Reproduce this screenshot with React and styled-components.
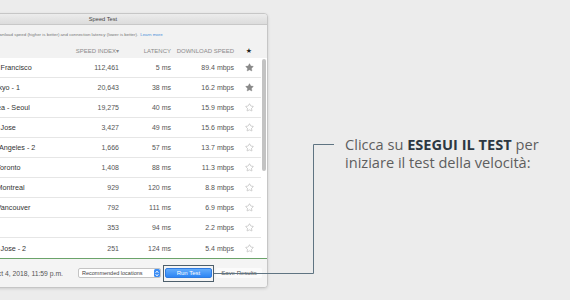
import React from "react";
import styled, { createGlobalStyle } from "styled-components";
import { Star } from "lucide-react";

const GlobalStyle = createGlobalStyle`
  html, body {
    margin: 0;
    padding: 0;
    background: #ececec;
  }
  body {
    font-family: "Liberation Sans", Arial, sans-serif;
    overflow: hidden;
  }
`;

const rows = [
  { name: "USA - San Francisco", speed: "112,461", latency: "5 ms", download: "89.4 mbps", fav: true },
  { name: "Japan - Tokyo - 1", speed: "20,643", latency: "38 ms", download: "16.2 mbps", fav: true },
  { name: "South Korea - Seoul", speed: "19,275", latency: "40 ms", download: "15.9 mbps" },
  { name: "USA - San Jose", speed: "3,427", latency: "49 ms", download: "15.6 mbps" },
  { name: "USA - Los Angeles - 2", speed: "1,666", latency: "57 ms", download: "13.7 mbps" },
  { name: "Canada - Toronto", speed: "1,408", latency: "88 ms", download: "11.3 mbps" },
  { name: "Canada - Montreal", speed: "929", latency: "120 ms", download: "8.8 mbps" },
  { name: "Canada - Vancouver", speed: "792", latency: "111 ms", download: "6.9 mbps" },
  { name: "", speed: "353", latency: "94 ms", download: "2.2 mbps" },
  { name: "USA - San Jose - 2", speed: "251", latency: "124 ms", download: "5.4 mbps" },
];

const App = () => {
  return (
    <Page>
      <GlobalStyle />
      <Window>
        <TitleBar>Speed Test</TitleBar>
        <Info>
          Ranked by download speed (higher is better) and connection latency
          (lower is better). <a>Learn more</a>
        </Info>
        <HeaderRow>
          <span />
          <HeadCell>SPEED INDEX▾</HeadCell>
          <HeadCell>LATENCY</HeadCell>
          <HeadCell>DOWNLOAD SPEED</HeadCell>
          <HeadStar>★</HeadStar>
        </HeaderRow>
        <ListArea>
          <List>
            {rows.map((r, i) => (
              <Row key={i}>
                <Location>{r.name}</Location>
                <Num>{r.speed}</Num>
                <Num>{r.latency}</Num>
                <Num>{r.download}</Num>
                <StarCell>
                  <Star
                    size={9}
                    strokeWidth={r.fav ? 1 : 1.3}
                    color={r.fav ? "#8a8a8a" : "#a0a0a0"}
                    fill={r.fav ? "#8a8a8a" : "none"}
                  />
                </StarCell>
              </Row>
            ))}
          </List>
          <Track>
            <Thumb />
          </Track>
        </ListArea>
        <Footer>
          <DateText>Last test: Oct 4, 2018, 11:59 p.m.</DateText>
          <Select>
            <span>Recommended locations</span>
            <Stepper>
              <svg width="4" height="7" viewBox="0 0 4 7">
                <path d="M0.5 3 L2 1 L3.5 3 M0.5 4 L2 6 L3.5 4" stroke="#fff" strokeWidth="0.8" fill="none" />
              </svg>
            </Stepper>
          </Select>
          <Highlight>
            <RunButton>Run Test</RunButton>
          </Highlight>
          <SaveButton>Save Results</SaveButton>
        </Footer>
      </Window>
      <Callout>
        Clicca su <b>ESEGUI IL TEST</b> per
        <br />
        iniziare il test della velocità:
      </Callout>
      <Connector width="570" height="300" viewBox="0 0 570 300">
        <path d="M214 273.5 H313.5 V144.5 H334" stroke="#5f7482" strokeWidth="1" fill="none" />
      </Connector>
    </Page>
  );
};

export default App;

const Page = styled.div`
  position: relative;
  width: 570px;
  height: 300px;
  display: flex;
  align-items: flex-start;
  overflow: hidden;
`;

const Window = styled.div`
  flex: none;
  margin-top: 13px;
  margin-left: -62px;
  width: 330px;
  height: 275px;
  box-sizing: border-box;
  border: 1px solid #c6c6c6;
  border-radius: 4px;
  background: #f2f2f2;
  box-shadow: 0 1px 3px rgba(0, 0, 0, 0.12);
  display: flex;
  flex-direction: column;
  overflow: hidden;
`;

const TitleBar = styled.div`
  height: 10px;
  flex: none;
  background: linear-gradient(#ececec, #dcdcdc);
  border-bottom: 1px solid #c8c8c8;
  font-size: 5.7px;
  color: #444;
  display: flex;
  align-items: center;
  justify-content: center;
`;

const Info = styled.div`
  height: 18px;
  flex: none;
  display: flex;
  align-items: center;
  padding-left: 33px;
  font-size: 4.4px;
  color: #777;
  white-space: nowrap;

  a {
    color: #4a90d9;
    margin-left: 2px;
  }
`;

const gridCols = `94px 60px 52px 63px 27px`;

const HeaderRow = styled.div`
  height: 15px;
  flex: none;
  display: grid;
  grid-template-columns: ${gridCols};
  padding-left: 26px;
  align-items: center;
`;

const HeadCell = styled.span`
  font-size: 6px;
  color: #8a8a8a;
  text-align: right;
  white-space: nowrap;
`;

const HeadStar = styled.span`
  font-family: "DejaVu Sans", sans-serif;
  font-size: 7px;
  color: #222;
  text-align: center;
  padding-left: 3px;
`;

const ListArea = styled.div`
  height: 200px;
  flex: none;
  display: flex;
  background: #fff;
  border-bottom: 1px solid #6ba36a;
`;

const List = styled.div`
  flex: 1;
  display: flex;
  flex-direction: column;
`;

const Row = styled.div`
  height: 20px;
  box-sizing: border-box;
  display: grid;
  grid-template-columns: ${gridCols};
  padding-left: 26px;
  align-items: center;
  border-bottom: 1px solid #e6e6e6;

  &:last-child {
    border-bottom: none;
  }
`;

const Location = styled.span`
  font-size: 7.2px;
  color: #333;
  white-space: nowrap;
`;

const Num = styled.span`
  font-size: 7px;
  color: #555;
  text-align: right;
  white-space: nowrap;
`;

const StarCell = styled.span`
  display: flex;
  justify-content: center;
  padding-left: 3px;
`;

const Track = styled.div`
  width: 6px;
  flex: none;
  padding: 1px 1px 0;
  box-sizing: border-box;
`;

const Thumb = styled.div`
  width: 4px;
  height: 112px;
  border-radius: 2px;
  background: #c3c3c3;
`;

const Footer = styled.div`
  flex: 1;
  display: flex;
  padding-left: 24px;
  align-items: center;
  background: #f4f4f4;
`;

const DateText = styled.span`
  width: 115px;
  flex: none;
  box-sizing: border-box;
  padding-right: 21px;
  text-align: right;
  font-size: 6.8px;
  color: #555;
  white-space: nowrap;
`;

const Select = styled.div`
  width: 83px;
  height: 10px;
  flex: none;
  box-sizing: border-box;
  display: flex;
  align-items: center;
  justify-content: space-between;
  padding-left: 3px;
  margin-right: 2px;
  background: #fff;
  border: 1px solid #c4c4c4;
  border-radius: 2px;
  font-size: 5.5px;
  color: #444;
`;

const Stepper = styled.span`
  width: 6px;
  height: 8px;
  border-radius: 1.5px;
  background: #3c8df4;
  display: flex;
  align-items: center;
  justify-content: center;
`;

const Highlight = styled.div`
  padding: 2.5px 1px;
  border: 1.3px solid #4d5f6c;
  display: flex;
  margin-right: 2px;
`;

const RunButton = styled.button`
  width: 47px;
  height: 10px;
  padding: 0;
  border: 1px solid #2f7be0;
  border-radius: 2px;
  background: linear-gradient(#64acfb, #2d85f4);
  color: #fff;
  font-family: "Liberation Sans", Arial, sans-serif;
  font-size: 6px;
`;

const SaveButton = styled.div`
  width: 46px;
  height: 10px;
  display: flex;
  align-items: center;
  justify-content: center;
  background: #fbfbfb;
  border-radius: 2px;
  font-size: 6px;
  color: #555;
`;

const Callout = styled.div`
  margin-left: 77px;
  margin-top: 135px;
  font-family: "Open Sans", sans-serif;
  font-size: 14.6px;
  line-height: 18px;
  color: #5e5e5e;
  white-space: nowrap;

  b {
    color: #2c3742;
    font-weight: 700;
  }
`;

const Connector = styled.svg`
  position: absolute;
  top: 0;
  left: 0;
  pointer-events: none;
`;
